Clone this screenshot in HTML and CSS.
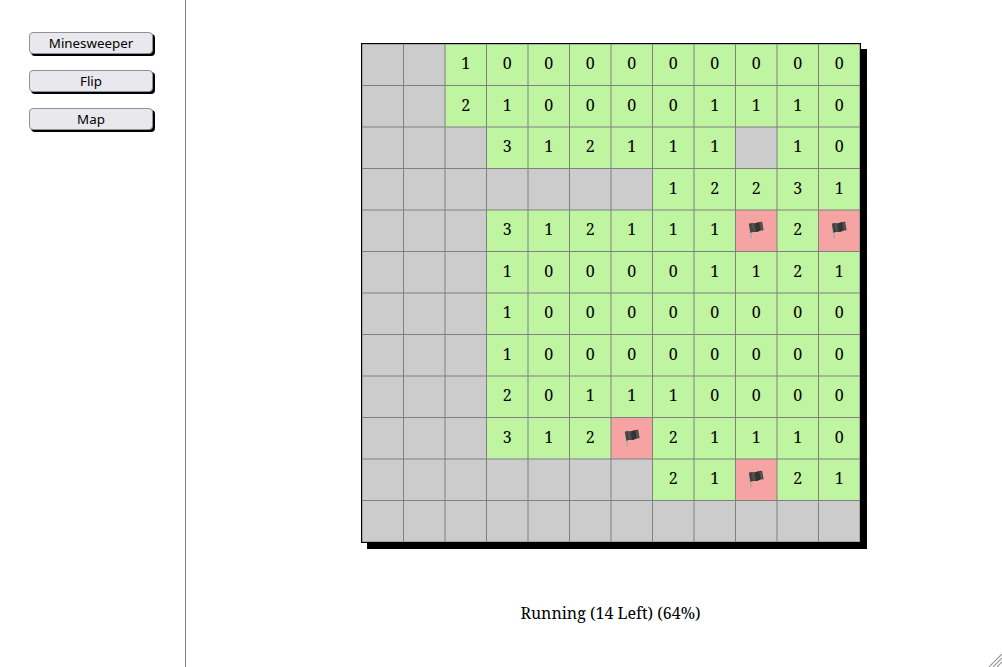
FILE: index.html
```
<!DOCTYPE html>
<html lang="en">
<head>
<meta charset="utf-8">
<title>Minesweeper</title>
<link rel="stylesheet" href="styles.css">
</head>
<body>
<nav class="sidebar">
<button class="nav-button">Minesweeper</button>
<button class="nav-button">Flip</button>
<button class="nav-button">Map</button>
</nav>
<main class="game">
<div class="board" id="board"></div>
<p class="status">Running (14 Left) (64%)</p>
<svg class="grip" width="14" height="14" viewBox="0 0 14 14"><path d="M1 14L14 1M5 14L14 5M9 14L14 9" stroke="#999" stroke-width="1.1" fill="none"/></svg>
</main>
<script src="board.js"></script>
</body>
</html>
```
FILE: board.js
```
// "." is a covered cell, "F" a flagged one, digits are revealed counts.
const rows = [
  "..1000000000",
  "..2100001110",
  "...312111.10",
  ".......12231",
  "...312111F2F",
  "...100001121",
  "...100000000",
  "...100000000",
  "...201110000",
  "...312F21110",
  ".......21F21",
  "............"
];
const flag = '<svg class="flag" width="16" height="18" viewBox="0 0 16 18"><path d="M1.5 3L3.3 16.8" stroke="#aaa" stroke-width="1.5" stroke-linecap="round"/><path d="M.9 2.7C4 1 5.5 2.6 8 2.1C10.5 1.6 11.5 .7 14.2 .9L15.6 9.3C13 8.8 11.5 10.2 9 10.8C6.6 11.3 5 10.4 2.3 11.8Z" fill="#444"/><path d="M7.1 2.2C9 1.9 10 1.3 11 1.2L12.2 9.5C10.7 10 9.8 10.7 8.2 10.9Z" fill="#343434"/><path d="M4.5 3L6 9.8M12.7 2L13.9 8.5" stroke="#585858" stroke-width="1.4"/></svg>';
document.getElementById("board").innerHTML = rows.join("").split("").map(c =>
  c === "." ? '<div class="cell"></div>' :
  c === "F" ? '<div class="cell flagged">' + flag + '</div>' :
  '<div class="cell open">' + c + '</div>').join("");
```
FILE: styles.css
```
body {
  margin: 0;
  height: 667px;
  display: flex;
  overflow: hidden;
  background: #fff;
  color: #000;
  font: 16px "Noto Serif", "DejaVu Serif Condensed", "DejaVu Serif", serif;
}
.sidebar {
  box-sizing: border-box;
  width: 186px;
  flex: none;
  border-right: 1px solid #808080;
  padding: 32px 32px 0 29px;
  display: flex;
  flex-direction: column;
  gap: 16px;
}
.nav-button {
  box-sizing: border-box;
  width: 124px;
  height: 22px;
  padding: 0;
  border: 1px solid #8f8f9d;
  border-radius: 4px;
  background: #e9e9ed;
  box-shadow: 2px 2px 0 #000;
  color: #000;
  font: 13.333px/20px "Noto Sans", sans-serif;
}
.game {
  position: relative;
  flex: 1;
  padding-top: 43px;
}
.board {
  position: relative;
  box-sizing: border-box;
  width: 500px;
  height: 500px;
  margin-left: 175px;
  border: 1px solid #000;
  box-shadow: 6px 6px 0 #000;
  display: grid;
  grid-template: repeat(12, 41.5px) / repeat(12, 41.5px);
}
/* Grid lines lie centred on the cell boundaries. */
.board::after {
  content: "";
  position: absolute;
  inset: 0;
  background:
    repeating-linear-gradient(90deg, #80808080 0 1px, transparent 1px 41px, #808080 41px 42px, transparent 42px 82px, #80808080 82px 83px),
    repeating-linear-gradient(180deg, #80808080 0 1px, transparent 1px 41px, #808080 41px 42px, transparent 42px 82px, #80808080 82px 83px);
}
.cell {
  background: #ccc;
  text-align: center;
  line-height: 38px;
}
.open { background: #bff4a1; }
.flagged { background: #f6a3a3; }
.flag {
  display: block;
  margin: 11px auto 0;
}
.status {
  margin: 59px 0 0 175px;
  width: 499px;
  text-align: center;
  line-height: 22px;
}
.grip {
  position: absolute;
  right: 0;
  bottom: 0;
}
```
